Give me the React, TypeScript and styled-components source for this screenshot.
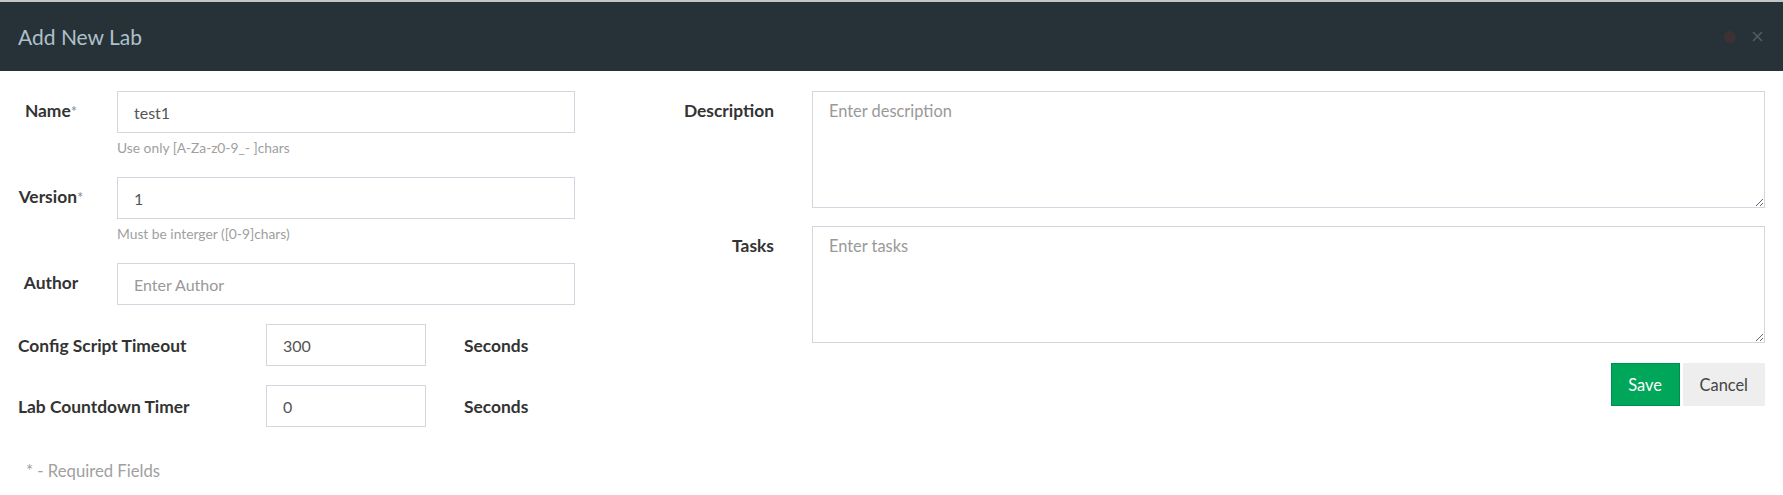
import styled, { createGlobalStyle } from 'styled-components';

const GlobalStyle = createGlobalStyle`
  html, body {
    margin: 0;
    padding: 0;
    background: #ffffff;
    font-family: Lato, "Open Sans", "Liberation Sans", sans-serif;
  }
  * {
    box-sizing: border-box;
  }
`;

// モーダル全体
const Modal = styled.div`
  width: 1783px;
  height: 495px;
  background: #ffffff;
  overflow: hidden;
`;

const Header = styled.div`
  display: flex;
  align-items: center;
  justify-content: space-between;
  height: 71px;
  padding: 0 20px 0 18px;
  background-color: #263238;
  border-top: 2px solid #c3c5c6;
`;

const Title = styled.h4`
  margin: 0;
  font-size: 21px;
  font-weight: 400;
  color: #afc0ca;
`;

const HeaderIcons = styled.div`
  display: flex;
  align-items: center;
  gap: 16px;
`;

const Dot = styled.span`
  width: 12px;
  height: 12px;
  border-radius: 50%;
  background: #3d3134;
`;

const Body = styled.div`
  display: grid;
  grid-template-columns: 594px 1fr;
  padding: 20px 18px 0 0;
`;

const LeftColumn = styled.div`
  display: flex;
  flex-direction: column;
`;

const FieldRow = styled.div`
  display: grid;
  grid-template-columns: 102px 458px;
  column-gap: 15px;
  margin-bottom: 19px;
`;

const Label = styled.label<{ $align?: string }>`
  padding-top: 9px;
  font-size: 17.4px;
  line-height: 22px;
  font-weight: 700;
  color: #333333;
  text-align: ${(p) => p.$align || 'center'};
`;

const Star = styled.span`
  font-weight: 400;
  font-size: 15px;
  color: #888888;
`;

const Input = styled.input`
  width: 100%;
  height: 42px;
  padding: 0 16px;
  border: 1px solid #d2d6de;
  border-radius: 0;
  font-family: inherit;
  font-size: 16px;
  color: #555555;
  outline: none;
  &::placeholder {
    color: #999999;
  }
`;

const Hint = styled.div`
  margin-top: 4px;
  font-size: 13.8px;
  line-height: 21px;
  color: #a0a0a0;
`;

const TimerRow = styled.div`
  display: grid;
  grid-template-columns: 248px 160px auto;
  align-items: center;
  padding-left: 18px;
  margin-bottom: 19px;
  font-size: 17.4px;
  font-weight: 700;
  color: #333333;
`;

const Unit = styled.span`
  padding-left: 38px;
`;

const Required = styled.div`
  margin-top: 14px;
  padding-left: 26px;
  font-size: 16.7px;
  line-height: 22px;
  color: #a0a0a0;
`;

const RightColumn = styled.div`
  display: flex;
  flex-direction: column;
  padding-left: 15px;
`;

const AreaRow = styled.div`
  display: grid;
  grid-template-columns: 165px 1fr;
  column-gap: 38px;
  margin-bottom: 18px;
`;

const TextArea = styled.textarea`
  width: 100%;
  height: 117px;
  padding: 8px 16px;
  border: 1px solid #d2d6de;
  border-radius: 0;
  font-family: inherit;
  font-size: 16.4px;
  line-height: 22px;
  color: #555555;
  outline: none;
  &::placeholder {
    color: #999999;
  }
`;

const Actions = styled.div`
  display: flex;
  justify-content: flex-end;
  gap: 3px;
  margin-top: 2px;
`;

const Button = styled.button<{ $primary?: boolean }>`
  height: 43px;
  padding: 0 16px;
  min-width: ${(p) => (p.$primary ? '69px' : '82px')};
  border: 1px solid ${(p) => (p.$primary ? '#008d4c' : '#eeeeee')};
  border-radius: 0;
  background: ${(p) => (p.$primary ? '#00a65a' : '#eeeeee')};
  color: ${(p) => (p.$primary ? '#ffffff' : '#444444')};
  font-family: inherit;
  font-size: 16.4px;
  cursor: pointer;
`;

export default function App() {
  return (
    <>
      <GlobalStyle />
      <Modal>
        <Header>
          <Title>Add New Lab</Title>
          <HeaderIcons>
            <Dot />
            <svg width="11" height="11" viewBox="0 0 11 11">
              <path d="M1 1 L10 10 M10 1 L1 10" stroke="#4c5c68" strokeWidth="1.6" />
            </svg>
          </HeaderIcons>
        </Header>
        <Body>
          <LeftColumn>
            <FieldRow>
              <Label>
                Name<Star>*</Star>
              </Label>
              <div>
                <Input defaultValue="test1" />
                <Hint>Use only [A-Za-z0-9_- ]chars</Hint>
              </div>
            </FieldRow>
            <FieldRow>
              <Label>
                Version<Star>*</Star>
              </Label>
              <div>
                <Input defaultValue="1" />
                <Hint>Must be interger ([0-9]chars)</Hint>
              </div>
            </FieldRow>
            <FieldRow>
              <Label>Author</Label>
              <Input placeholder="Enter Author" />
            </FieldRow>
            <TimerRow>
              <span>Config Script Timeout</span>
              <Input defaultValue="300" />
              <Unit>Seconds</Unit>
            </TimerRow>
            <TimerRow>
              <span>Lab Countdown Timer</span>
              <Input defaultValue="0" />
              <Unit>Seconds</Unit>
            </TimerRow>
            <Required>* - Required Fields</Required>
          </LeftColumn>
          <RightColumn>
            <AreaRow>
              <Label $align="right">Description</Label>
              <TextArea placeholder="Enter description" />
            </AreaRow>
            <AreaRow>
              <Label $align="right">Tasks</Label>
              <TextArea placeholder="Enter tasks" />
            </AreaRow>
            <Actions>
              <Button $primary>Save</Button>
              <Button>Cancel</Button>
            </Actions>
          </RightColumn>
        </Body>
      </Modal>
    </>
  );
}
